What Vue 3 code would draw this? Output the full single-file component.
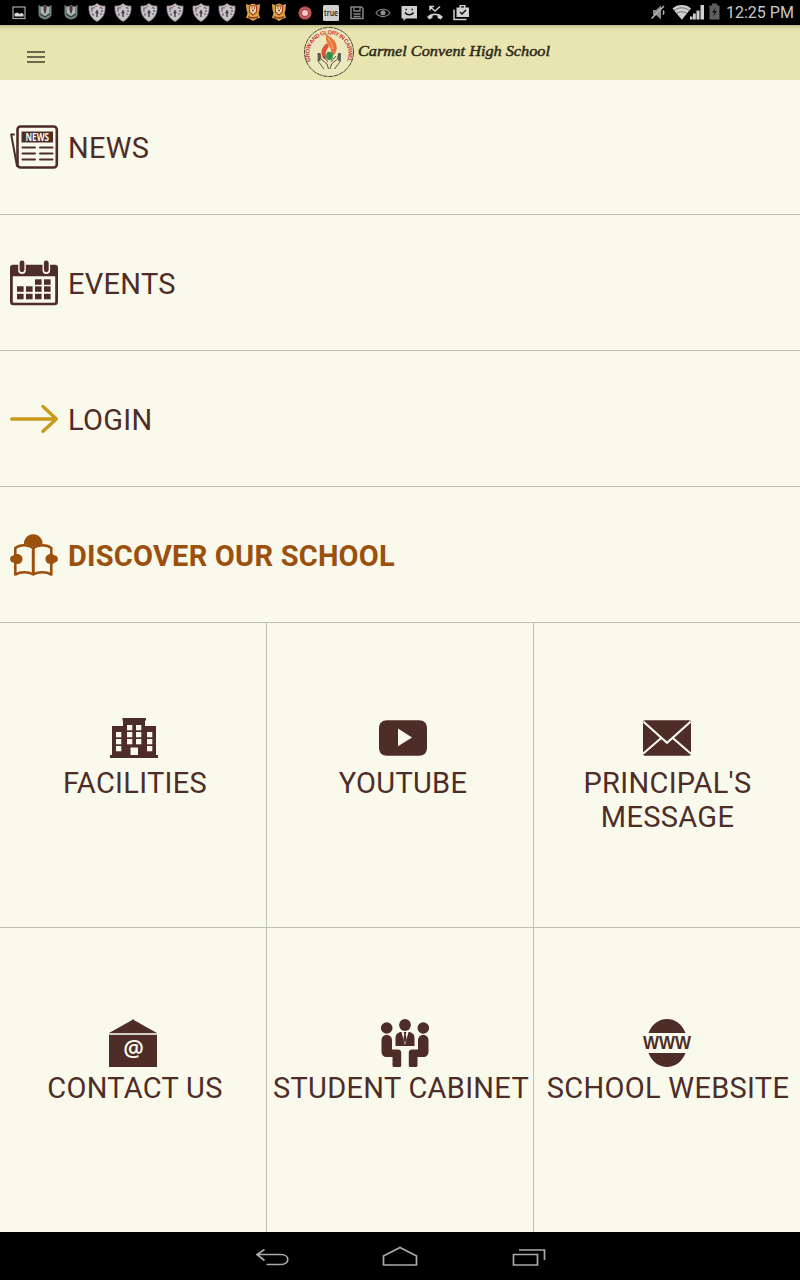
<script setup>
const notifications = [
  'image', 'crest', 'crest',
  'shield', 'shield', 'shield', 'shield', 'shield', 'shield',
  'gold', 'gold', 'record', 'true', 'save', 'eye', 'sms', 'missed', 'play'
]
const rows = [
  { id: 'news', label: 'NEWS' },
  { id: 'events', label: 'EVENTS' },
  { id: 'login', label: 'LOGIN' },
  { id: 'discover', label: 'DISCOVER OUR SCHOOL' }
]
const tiles = [
  { id: 'facilities', label: 'FACILITIES' },
  { id: 'youtube', label: 'YOUTUBE' },
  { id: 'message', label: "PRINCIPAL'S MESSAGE" },
  { id: 'contact', label: 'CONTACT US' },
  { id: 'cabinet', label: 'STUDENT CABINET' },
  { id: 'website', label: 'SCHOOL WEBSITE' }
]
const eventCells = [
  [25, 19], [34, 19],
  [7, 26], [16, 26], [25, 26], [34, 26],
  [7, 33.5], [16, 33.5], [25, 33.5], [34, 33.5]
]
const windowCells = [
  [17, 11], [26, 11], [17, 18], [26, 18], [17, 25], [26, 25],
  [6, 18], [6, 25], [6, 32], [37, 18], [37, 25], [37, 32]
]
</script>

<template>
  <div class="screen">
    <div class="status">
      <div class="notes">
        <svg v-for="(n, i) in notifications" :key="i" class="note" viewBox="0 0 26 25">
          <template v-if="n === 'image'">
            <rect x="7" y="7" width="12" height="11.500" fill="none" stroke="#a8a8a8" stroke-width="1.200" />
            <path d="M8.500 16.500v-3l3-1 2 1.500 2-1 2 1v2.500z" fill="#d8d8d8" />
          </template>
          <template v-else-if="n === 'crest'">
            <path d="M6.500 5l3 1.500L13 5l3.500 1.500 3-1.500v9c0 3-3 5-6.500 5.500C9.500 19 6.500 17 6.500 14z" fill="#72857f" />
            <path d="M9 7h8v6l-4 3-4-3z" fill="#a9b9b4" />
            <path d="M11.500 6h3v3.500l-1 4h-1l-1-4z" fill="#5d3434" />
            <path d="M8 14l5 3 5-3" fill="none" stroke="#33413e" stroke-width="1.400" />
          </template>
          <template v-else-if="n === 'shield'">
            <path d="M5 6c3 .3 6-.6 8-2.500 2 1.900 5 2.800 8 2.500.6 7-2 12.500-8 15.500C7 18.500 4.400 13 5 6z" fill="#c9c3c9" stroke="#857c85" stroke-width=".8" />
            <path d="M13 10v7M11.500 12.500h3" stroke="#333" stroke-width="1.300" />
            <path d="M8 7.500v3M10 7v1.500M16 7.500l2.500 1M18 10v2M8.500 13.500l1 2M16.500 14.500l1-1" stroke="#514a5c" stroke-width="1.200" />
            <path d="M11 6.500h2M7 11.500h2" stroke="#b87880" />
          </template>
          <template v-else-if="n === 'gold'">
            <path d="M6 4l3 1 4-1.500 4 1.500 3-1-.5 6-1 3 1.500 5-3 .5-4 2.500-4-2.500-3-.5 1.500-5-1-3z" fill="#d9a544" />
            <path d="M9.500 6h7v6l-3.500 3-3.500-3z" fill="#e9d6a5" stroke="#a63a25" stroke-width="1.100" />
            <path d="M11.500 8h1M14 8h1M12 10.500h2M8 17l5 1 5-1" stroke="#963d25" stroke-width="1.300" fill="none" />
          </template>
          <template v-else-if="n === 'record'">
            <circle cx="13" cy="13" r="6.700" fill="#a94245" />
            <circle cx="13" cy="13" r="5" fill="none" stroke="#c96b6b" stroke-width="1.200" />
            <circle cx="13" cy="13" r="3" fill="#f3c9c5" />
          </template>
          <template v-else-if="n === 'true'">
            <rect x="5" y="5" width="16" height="16" rx="1.500" fill="#d0d0d0" />
            <text x="6" y="16" textLength="14" lengthAdjust="spacingAndGlyphs" class="true-text">true</text>
          </template>
          <template v-else-if="n === 'save'">
            <path d="M7 7h10.500L19 8.500V18.500H7z" fill="none" stroke="#858585" stroke-width="1.500" />
            <path d="M10 7v4h6V7M9.500 14h7M9.500 16.500h7" fill="none" stroke="#858585" stroke-width="1.300" />
          </template>
          <template v-else-if="n === 'eye'">
            <path d="M6 13c3.500-5 10.500-5 14 0-3.500 4.700-10.500 4.700-14 0z" fill="none" stroke="#858585" stroke-width="1.200" />
            <circle cx="13" cy="12.800" r="2.500" fill="#909090" />
          </template>
          <template v-else-if="n === 'sms'">
            <path d="M5.500 6h15.500v12.500H10L7.500 21v-2.500h-2z" fill="#d0d0d0" />
            <path d="M9.500 9.500h1.500M15.500 9.500h1.500M9 12.500c2 3 6.500 3 8.500 0" fill="none" stroke="#151515" stroke-width="1.500" />
          </template>
          <template v-else-if="n === 'missed'">
            <path d="M8 10.500V6.500h4M8.500 7l4.500 4 5-4.500" fill="none" stroke="#d0d0d0" stroke-width="1.500" />
            <path d="M5 17c4-4.600 12-4.600 16 0l-2.500 2.500-3-1.800v-2c-1.500-.5-3.500-.5-5 0v2l-3 1.800z" fill="#d0d0d0" />
          </template>
          <template v-else>
            <path d="M8.500 7.500h3V5h6v2.500H21V17H8.500zM13 6.300v1.200h3V6.300z" fill="#d0d0d0" fill-rule="evenodd" />
            <path d="M6 9.500v10h12.500" fill="none" stroke="#d0d0d0" stroke-width="1.500" />
            <path d="M12 12l2 2 4-4" fill="none" stroke="#111" stroke-width="1.500" />
          </template>
        </svg>
      </div>
      <div class="system">
        <svg width="76" height="25" viewBox="0 0 76 25">
          <path d="M3 10h3l5-4.500v14L6 15H3z" fill="#8d8d8d" />
          <path d="M1.500 18.500L14 6M13 10.500c1 1 1 3 0 4" fill="none" stroke="#b5b5b5" stroke-width="1.500" />
          <path d="M22.500 8.500c5-4.600 13.500-4.600 18.500 0L31.800 19.700z" fill="#cfcfcf" />
          <path d="M24 10.600c4.500-3.700 11-3.700 15.500 0M26.600 13.500c3-2.300 7.500-2.300 10.500 0" stroke="#555" stroke-width=".8" fill="none" />
          <path d="M40 19.500v-3h2.500v3zM43 19.500v-6h2.800v6zM46.500 19.500v-9h3v9zM50.500 19.500V5H54v14.500z" fill="#cfcfcf" />
          <path d="M59.500 5.500h2.500V3.500h5v2h2.500v14h-10z" fill="#5e5e5e" />
          <path d="M66 7l-4 5.500h2.500l-1.500 4.500 4-6h-2.500z" fill="#111" />
        </svg>
        <span class="clock">12:25 PM</span>
      </div>
    </div>

    <header class="bar">
      <svg class="burger" width="18" height="12" viewBox="0 0 18 12">
        <path d="M0 1h18M0 6h18M0 11h18" stroke="#6b6852" stroke-width="1.800" />
      </svg>
      <svg class="brand" width="270" height="55" viewBox="0 0 270 55">
        <defs>
          <path id="ring" d="M8.300 37A19.500 19.500 0 1 1 43.700 37" />
        </defs>
        <circle cx="26" cy="27" r="24.500" fill="#ece8bd" stroke="#4b452f" stroke-width="1" stroke-dasharray="5 .7" />
        <text class="motto"><textPath href="#ring" startOffset="1" textLength="76">GROW AND GLORY IN CARMEL</textPath></text>
        <path d="M23 9.500c7 3 12 8.500 10.500 15.500-.8 4-3.500 6-6.500 8 2-6 1.500-9-2-14-2-3-2.500-5.500-2-9.500z" fill="#e8743f" />
        <path d="M24 18c-5 4-8 10-3 16l3-1c-3-5 0-8 2-12z" fill="#dd563a" />
        <path d="M25 12c1 4 5 7 5 12" stroke="#f0a15c" stroke-width="1.500" fill="none" />
        <ellipse cx="26.500" cy="31" rx="3.500" ry="4.200" fill="#3c9a57" />
        <path d="M25 27l3 7M29 28l-4 6" stroke="#247546" stroke-width=".7" />
        <path d="M16 28v8M36.500 28v8" stroke="#5d5b5a" stroke-width="2.800" />
        <path d="M17 29l1 5 6 5 1.500 5M35.500 29l-1 5-6 5-1.500 5M15 36l6 8M37.500 36l-6 8M20 31l5 6M33 31l-5 6" fill="none" stroke="#4e4230" stroke-width=".9" />
        <text x="55" y="31" textLength="192" lengthAdjust="spacingAndGlyphs" class="brand-text">Carmel Convent High School</text>
      </svg>
    </header>

    <main>
      <div v-for="r in rows" :key="r.id" class="row" :class="r.id">
        <svg class="icon" viewBox="0 0 48 48">
          <template v-if="r.id === 'news'">
            <rect x="7.500" y="3.500" width="39.300" height="41" rx="3" fill="none" stroke="#4e2d28" stroke-width="2.600" />
            <path d="M4 11.500H1.200L7 43" fill="none" stroke="#4e2d28" stroke-width="2" stroke-linejoin="round" stroke-linecap="round" />
            <path d="M11.500 8.500h31.500V19.500H11.500z" fill="#4e2d28" />
            <text x="15.500" y="17.500" textLength="23.500" lengthAdjust="spacingAndGlyphs" class="news-text">NEWS</text>
            <path d="M12.500 24.500h12.500M30 24.500h12.500M12.500 30.500h12.500M30 30.500h12.500M12.500 36.500h12.500M30 36.500h12.500" stroke="#4e2d28" stroke-width="2" stroke-linecap="round" />
          </template>
          <template v-else-if="r.id === 'events'">
            <g transform="translate(0 1.300)">
              <path d="M3 4.500h42a3 3 0 0 1 3 3v34a3.500 3.500 0 0 1-3.500 3.500h-41A3.500 3.500 0 0 1 0 41.500V7.500a3 3 0 0 1 3-3zM2.800 16v25c0 1 .5 1.500 1.500 1.500h39.400c1 0 1.500-.5 1.500-1.500V16z" fill="#4e2d28" fill-rule="evenodd" />
              <path d="M12 3v7M36.300 3v7" stroke="#f9f9ec" stroke-width="7.600" stroke-linecap="round" />
              <path d="M12 2.500v7M36.300 2.500v7" stroke="#4e2d28" stroke-width="4.800" stroke-linecap="round" />
              <rect v-for="(c, i) in eventCells" :key="i" :x="c[0]" :y="c[1]" width="6.600" height="5.500" fill="#4e2d28" />
            </g>
          </template>
          <template v-else-if="r.id === 'login'">
            <path d="M1.700 24h44M33 11.500L46.300 24 33 36.300" fill="none" stroke="#c99a1b" stroke-width="3.400" stroke-linecap="round" stroke-linejoin="round" />
          </template>
          <template v-else>
            <path d="M14 13.500a9.300 9.300 0 1 1 18.500 0c-4 .3-7 1.200-9.200 2.500-2.300-1.300-5.300-2.200-9.300-2.500z" fill="#9c500e" />
            <path d="M23.300 17C18.500 13.500 10 13 5.300 17v26.500c5.200-3 13-3 18 0 5-3 12.800-3 18 0V17c-4.700-4-13.200-3.500-18 0z" fill="#f9f9ec" stroke="#9c500e" stroke-width="2.600" stroke-linejoin="round" />
            <path d="M23.300 17v26" stroke="#9c500e" stroke-width="3" />
            <path d="M3.500 24.500C4.500 22 12.500 22 12.500 28S4.500 34 3.500 31.500C-1 31.500-1 24.500 3.500 24.500zM44.500 24.500C43.500 22 35.500 22 35.500 28s8 6 9 3.500c4.500 0 4.500-7 0-7z" fill="#9c500e" />
          </template>
        </svg>
        <span class="label">{{ r.label }}</span>
      </div>

      <div class="grid">
        <div v-for="t in tiles" :key="t.id" class="tile" :class="t.id">
          <svg class="icon" viewBox="0 0 48 48">
            <template v-if="t.id === 'facilities'">
              <path d="M12.500 4h23.500v2.500h-1V12H46v29h2v3H0v-3h2V12h11V6.500h-.5z" fill="#4e2d28" />
              <rect v-for="(c, i) in windowCells" :key="i" :x="c[0]" :y="c[1]" width="5.300" height="5.300" fill="#f9f9ec" />
              <path d="M20.500 33.500H28V41h-7.500z" fill="#f9f9ec" />
            </template>
            <template v-else-if="t.id === 'youtube'">
              <path d="M8 6.300h32c5 0 8 3 8 8v19.500c0 5-3 8-8 8H8c-5 0-8-3-8-8V14.300c0-5 3-8 8-8z" fill="#4e2d28" />
              <path d="M19 14.500v17.800L33 23.500z" fill="#f9f9ec" />
            </template>
            <template v-else-if="t.id === 'message'">
              <rect y="6.300" width="48" height="35.500" rx="2" fill="#4e2d28" />
              <path d="M.5 7.800L24 28.800 47.500 7.800M0 39.800l18.500-16M48 39.800l-18.500-16" fill="none" stroke="#f9f9ec" stroke-width="2.100" />
            </template>
            <template v-else-if="t.id === 'contact'">
              <path d="M24 0l1.200 1.200L48 14H0L22.800 1.200z" fill="#4e2d28" />
              <path d="M0 14h48v2H0z" fill="#d4cdc2" />
              <path d="M0 16h48v32H0z" fill="#4e2d28" />
              <text x="24.500" y="38.300" text-anchor="middle" class="at-text">@</text>
            </template>
            <template v-else-if="t.id === 'cabinet'">
              <g fill="#4e2d28">
                <circle cx="5.700" cy="9" r="5.800" /><circle cx="24" cy="6" r="5.900" /><circle cx="42.300" cy="9" r="5.800" />
                <path d="M.5 21a5 5 0 0 1 10.500 0v9.500h6c2 0 3.200 1.200 3.200 3.200V46.500a1.500 1.500 0 0 1-1.500 1.500H13a1.500 1.500 0 0 1-1.500-1.500V38H6c-3.500 0-5.500-2-5.500-5.500zM47.500 21a5 5 0 0 0-10.500 0v9.500h-6c-2 0-3.200 1.200-3.200 3.200V46.500a1.500 1.500 0 0 0 1.500 1.500H35a1.500 1.500 0 0 0 1.500-1.500V38H42c3.500 0 5.500-2 5.500-5.500z" />
                <path d="M14.500 27v-8c0-3.500 2.500-6 6-6h7c3.500 0 6 2.500 6 6v8z" />
              </g>
              <path d="M20.500 13h7L24 26z" fill="#f9f9ec" />
              <path d="M22.700 13h2.600l-.5 2.500.8 5L24 24l-1.600-3.500.8-5z" fill="#4e2d28" />
            </template>
            <template v-else>
              <path d="M5.500 14C12.500-4.600 35.500-4.600 42.500 14zM5.500 34C12.500 52.600 35.500 52.600 42.500 34z" fill="#4e2d28" />
              <text x="0" y="30" textLength="48" lengthAdjust="spacingAndGlyphs" class="www-text">WWW</text>
            </template>
          </svg>
          <span class="label">{{ t.label }}</span>
        </div>
      </div>
    </main>

    <nav class="nav">
      <svg width="300" height="48" viewBox="0 0 300 48" fill="none" stroke="#a9a9a9" stroke-width="1.700">
        <path d="M14.500 17.500L7 22.500l7.500 6M7.500 22.500H31c9 0 9 10 0 10H16.500" />
        <path d="M133.500 33V24L150 15.500 166.500 24v9z" />
        <path d="M263.500 22.500h24v10.500h-24zM269 18h25.500v10" />
      </svg>
    </nav>
  </div>
</template>

<style>
body { margin: 0; background: #f9f9ec; }
</style>

<style scoped>
.screen { width: 800px; height: 1280px; display: flex; flex-direction: column; background: #f9f9ec; font-family: Roboto, sans-serif; color: #4e2d28; overflow: hidden; }
.status { height: 25px; flex: none; background: #000; display: flex; justify-content: space-between; }
.notes { display: flex; padding-left: 6px; }
.note { width: 26px; height: 25px; flex: none; }
.system { display: flex; padding-right: 6px; }
.clock { width: 68px; font-size: 16px; line-height: 25px; color: #c8c8c8; white-space: nowrap; }
.true-text { font: 600 8.500px "Open Sans", sans-serif; fill: #222; }
.bar { height: 55px; flex: none; background: linear-gradient(#bfbb8c, #dfdba9 3px, #e9e5b1 7px); display: flex; align-items: center; }
.burger { margin: 8px 0 0 27px; }
.brand { margin-left: 258px; }
.motto { font: bold 5.800px "Liberation Sans", sans-serif; fill: #c8363a; }
.brand-text { font: italic 15.500px "Liberation Serif", serif; fill: #2f2915; stroke: #2f2915; stroke-width: .5px; }
main { flex: 1; display: flex; flex-direction: column; }
.row { height: 135px; border-bottom: 1px solid #bfc0b6; display: flex; align-items: center; padding-left: 10px; }
.row.news { height: 134px; }
.icon { width: 48px; height: 48px; flex: none; overflow: visible; }
.row .label { margin-left: 10px; padding-top: 2px; }
.label { font-size: 29px; line-height: 34px; letter-spacing: .3px; }
.discover .label { color: #9c500e; font-weight: 700; letter-spacing: .22px; }
.news-text { font: bold 10px "Open Sans", sans-serif; fill: #f9f9ec; }
.at-text { font: 600 23px "Open Sans", sans-serif; fill: #f9f9ec; }
.www-text { font: bold 17.500px "Liberation Sans", sans-serif; fill: #4e2d28; }
.grid { display: grid; grid-template-columns: 267px 267px 266px; grid-template-rows: 305px 304px; }
.tile { display: flex; flex-direction: column; align-items: center; padding-top: 91px; box-sizing: border-box; border-right: 1px solid #bfc0b6; border-bottom: 1px solid #bfc0b6; text-align: center; }
.tile:nth-child(3n) { border-right: 0; }
.tile:nth-child(n + 4) { border-bottom: 0; }
.tile .label { margin-top: 4px; white-space: nowrap; }
.tile.message .label { white-space: normal; margin-left: 1px; }
.tile.facilities .icon { margin-left: 2px; }
.tile.facilities .label { margin-left: 4px; }
.tile.youtube { padding-left: 6px; }
.tile.contact .label { margin-left: 4px; }
.tile.cabinet .icon { margin-left: 10px; }
.tile.cabinet .label { margin-left: 2px; }
.tile.website .label { margin-left: 2px; }
.nav { height: 48px; flex: none; background: #000; display: flex; justify-content: center; }
</style>
